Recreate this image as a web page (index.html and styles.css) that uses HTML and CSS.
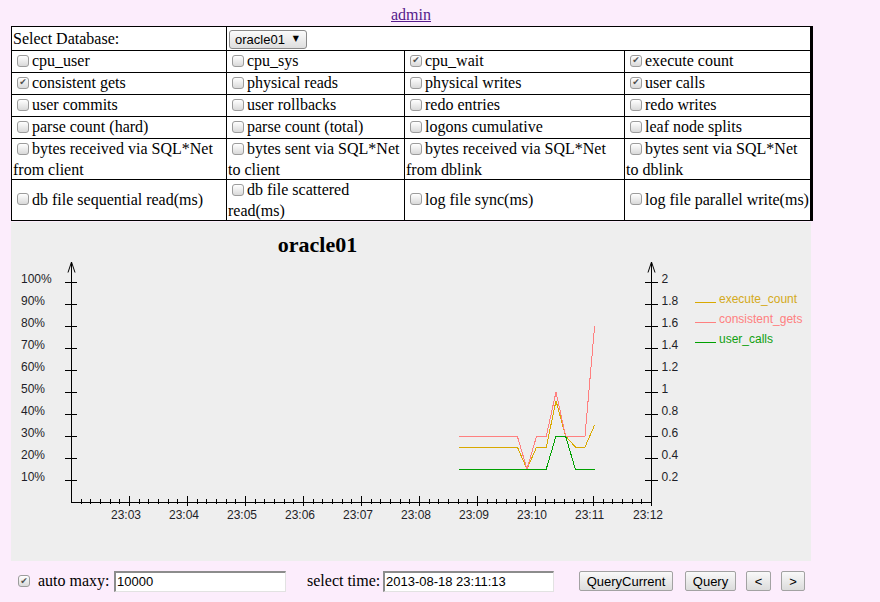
FILE: index.html
```html
<!DOCTYPE html>
<html>
<head>
<meta charset="utf-8">
<title>oracle01</title>
<link rel="stylesheet" href="styles.css">
</head>
<body>
<div class="page">
  <div class="top"><a class="admin" href="#">admin</a></div>
  <table class="grid">
    <colgroup><col class="c1"><col class="c2"><col class="c3"><col class="c4"></colgroup>
    <tr class="r-sel">
      <td>Select Database:</td>
      <td colspan="3"><span class="sel"><select><option>oracle01</option></select></span></td>
    </tr>
    <tr class="r1">
      <td><input type="checkbox">cpu_user</td>
      <td><input type="checkbox">cpu_sys</td>
      <td><input type="checkbox" checked>cpu_wait</td>
      <td><input type="checkbox" checked>execute count</td>
    </tr>
    <tr class="r1">
      <td><input type="checkbox" checked>consistent gets</td>
      <td><input type="checkbox">physical reads</td>
      <td><input type="checkbox">physical writes</td>
      <td><input type="checkbox" checked>user calls</td>
    </tr>
    <tr class="r1">
      <td><input type="checkbox">user commits</td>
      <td><input type="checkbox">user rollbacks</td>
      <td><input type="checkbox">redo entries</td>
      <td><input type="checkbox">redo writes</td>
    </tr>
    <tr class="r1">
      <td><input type="checkbox">parse count (hard)</td>
      <td><input type="checkbox">parse count (total)</td>
      <td><input type="checkbox">logons cumulative</td>
      <td><input type="checkbox">leaf node splits</td>
    </tr>
    <tr class="r2">
      <td><input type="checkbox">bytes received via SQL*Net from client</td>
      <td><input type="checkbox">bytes sent via SQL*Net to client</td>
      <td><input type="checkbox">bytes received via SQL*Net from dblink</td>
      <td><input type="checkbox">bytes sent via SQL*Net to dblink</td>
    </tr>
    <tr class="r2">
      <td><input type="checkbox">db file sequential read(ms)</td>
      <td><input type="checkbox">db file scattered read(ms)</td>
      <td><input type="checkbox">log file sync(ms)</td>
      <td><input type="checkbox">log file parallel write(ms)</td>
    </tr>
  </table>

  <div class="chart">
    <svg class="plot" width="800" height="339" viewBox="0 0 800 339" xmlns="http://www.w3.org/2000/svg">
      <text class="title" x="306.5" y="30" text-anchor="middle">oracle01</text>

      <g class="axis" fill="none" stroke="#000" stroke-width="1" shape-rendering="crispEdges">
        <path d="M60.5 40V280.5H640.5V40"/>
        <path d="M54 60.5h12M54 82.5h12M54 104.5h12M54 126.5h12M54 148.5h12M54 170.5h12M54 192.5h12M54 214.5h12M54 236.5h12M54 258.5h12"/>
        <path d="M634 60.5h13M634 82.5h13M634 104.5h13M634 126.5h13M634 148.5h13M634 170.5h13M634 192.5h13M634 214.5h13M634 236.5h13M634 258.5h13"/>
        <path d="M118.5 274v10M176.5 274v10M234.5 274v10M292.5 274v10M350.5 274v10M408.5 274v10M466.5 274v10M524.5 274v10M582.5 274v10M640.5 274v10"/>
        <path d="M70.5 277v5M79.5 277v5M89.5 277v5M99.5 277v5M108.5 277v5M128.5 277v5M137.5 277v5M147.5 277v5M157.5 277v5M166.5 277v5M186.5 277v5M195.5 277v5M205.5 277v5M215.5 277v5M224.5 277v5M244.5 277v5M253.5 277v5M263.5 277v5M273.5 277v5M282.5 277v5M302.5 277v5M311.5 277v5M321.5 277v5M331.5 277v5M340.5 277v5M360.5 277v5M369.5 277v5M379.5 277v5M389.5 277v5M398.5 277v5M418.5 277v5M427.5 277v5M437.5 277v5M447.5 277v5M456.5 277v5M476.5 277v5M485.5 277v5M495.5 277v5M505.5 277v5M514.5 277v5M534.5 277v5M543.5 277v5M553.5 277v5M563.5 277v5M572.5 277v5M592.5 277v5M601.5 277v5M611.5 277v5M621.5 277v5M630.5 277v5"/>
      </g>
      <g fill="none" stroke="#000" stroke-width="1">
        <path d="M57 50.5L60.5 40L64 50.5"/>
        <path d="M637 50.5L640.5 40L644 50.5"/>
      </g>

      <g class="lbl">
        <text x="10" y="61">100%</text>
        <text x="10" y="83">90%</text>
        <text x="10" y="105">80%</text>
        <text x="10" y="127">70%</text>
        <text x="10" y="149">60%</text>
        <text x="10" y="171">50%</text>
        <text x="10" y="193">40%</text>
        <text x="10" y="215">30%</text>
        <text x="10" y="237">20%</text>
        <text x="10" y="259">10%</text>

        <text x="650.5" y="61">2</text>
        <text x="650.5" y="83">1.8</text>
        <text x="650.5" y="105">1.6</text>
        <text x="650.5" y="127">1.4</text>
        <text x="650.5" y="149">1.2</text>
        <text x="650.5" y="171">1</text>
        <text x="650.5" y="193">0.8</text>
        <text x="650.5" y="215">0.6</text>
        <text x="650.5" y="237">0.4</text>
        <text x="650.5" y="259">0.2</text>

        <text x="100" y="297">23:03</text>
        <text x="158" y="297">23:04</text>
        <text x="216" y="297">23:05</text>
        <text x="274" y="297">23:06</text>
        <text x="332" y="297">23:07</text>
        <text x="390" y="297">23:08</text>
        <text x="448" y="297">23:09</text>
        <text x="506" y="297">23:10</text>
        <text x="564" y="297">23:11</text>
        <text x="622" y="297">23:12</text>
      </g>

      <g fill="none" stroke-width="1" shape-rendering="crispEdges">
        <polyline stroke="#d9a900" points="448.3,225 506.3,225 516,247 525.6,225 535.3,225 545,178.8 554.6,214 564.3,225 574,225 583.6,203"/>
        <polyline stroke="#ff8080" points="448.3,214 506.3,214 516,247 525.6,214 535.3,214 545,170 554.6,214 574,214 583.6,104"/>
        <polyline stroke="#00a000" points="448.3,247 535.3,247 545,214 554.6,214 564.3,247 583.6,247"/>
        <path stroke="#d9a900" d="M684 80.5h21"/>
        <path stroke="#ff8080" d="M684 100.5h21"/>
        <path stroke="#00a000" d="M684 120.5h21"/>
      </g>
      <g class="legend">
        <text x="708" y="81" fill="#d4aa20">execute_count</text>
        <text x="708" y="101" fill="#ff8080">consistent_gets</text>
        <text x="708" y="121" fill="#10a010">user_calls</text>
      </g>
    </svg>
  </div>

  <div class="controls">
    <input class="cb" type="checkbox" checked>
    <span class="lab maxy-lab">auto maxy:</span>
    <input class="txt maxy" type="text" value="10000">
    <span class="lab time">select time:</span>
    <input class="txt when" type="text" value="2013-08-18 23:11:13">
    <button class="btn b-cur">QueryCurrent</button>
    <button class="btn b-q">Query</button>
    <button class="btn b-prev">&lt;</button>
    <button class="btn b-next">&gt;</button>
  </div>
</div>
</body>
</html>
```

FILE: styles.css
```css
html, body {
  margin: 0;
  padding: 0;
  background: #fcedfc;
}
body {
  font-family: "Liberation Serif", "Times New Roman", serif;
  font-size: 16px;
  color: #000;
}
.page {
  width: 800px;
  margin-left: 11px;
}
.top {
  padding-top: 6px;
  text-align: center;
  line-height: 18px;
  box-sizing: border-box;
  height: 26px;
}
.admin {
  color: #551a8b;
}
.grid {
  width: 800px;
  border-collapse: collapse;
  table-layout: fixed;
  background: #fff;
  border-right: 3px solid #000;
}
.c1 { width: 215px; }
.c2 { width: 178px; }
.c3 { width: 220px; }
.c4 { width: 187px; }
.grid td {
  border: 1px solid #000;
  padding: 0 1px;
  line-height: 19px;
  vertical-align: middle;
}
.r-sel { height: 24px; }
.r1 { height: 22px; }
.r2 { height: 41px; }

input[type="checkbox"] {
  -webkit-appearance: none;
  appearance: none;
  width: 12px;
  height: 12px;
  margin: 1px 3px 5px 4px;
  box-sizing: border-box;
  border: 1px solid #9c9c9c;
  border-radius: 3px;
  background: linear-gradient(#ffffff, #d9d9d9);
  vertical-align: middle;
  display: inline-flex;
  align-items: center;
  justify-content: center;
}
input[type="checkbox"]:checked::before {
  content: "\2714";
  font-family: "DejaVu Sans", sans-serif;
  font-size: 9px;
  line-height: 9px;
  color: #505050;
}

.sel {
  position: relative;
  display: inline-block;
  margin-left: 1px;
  vertical-align: middle;
}
.sel select {
  -webkit-appearance: none;
  appearance: none;
  width: 78px;
  height: 19px;
  box-sizing: border-box;
  border: 1px solid #8a8a8a;
  border-radius: 3px;
  background: linear-gradient(#fbfbfb, #dedede);
  font-family: "Liberation Sans", Arial, sans-serif;
  font-size: 13px;
  padding: 0 0 0 5px;
  color: #000;
  display: block;
}
.sel::after {
  content: "\25BC";
  position: absolute;
  right: 8px;
  top: 5px;
  font-family: "DejaVu Sans", sans-serif;
  font-size: 8px;
  line-height: 8px;
  color: #000;
  pointer-events: none;
}

.chart {
  width: 800px;
  height: 339px;
  background: #eeeeee;
  margin-top: 1px;
}
.plot {
  display: block;
}
.title {
  font-family: "Liberation Serif", "Times New Roman", serif;
  font-weight: bold;
  font-size: 22px;
  fill: #000;
}
.lbl text {
  font-family: "Liberation Sans", Arial, sans-serif;
  font-size: 12px;
  fill: #1e1e28;
}
.legend text {
  font-family: "Liberation Sans", Arial, sans-serif;
  font-size: 12px;
}

.controls {
  display: flex;
  align-items: center;
  margin-top: 9px;
  height: 22px;
}
.controls .cb {
  margin: 0 0 0 7px;
  flex: none;
}
.lab {
  flex: none;
  white-space: nowrap;
}
.maxy-lab {
  margin-left: 8px;
  width: 70px;
}
.lab.time {
  margin-left: 21px;
  width: 70px;
}
.txt {
  flex: none;
  box-sizing: border-box;
  height: 21px;
  margin-left: 6px;
  border-style: solid;
  border-width: 2px 1px 1px 2px;
  border-color: #8c8c8c #e2e2e2 #e2e2e2 #8c8c8c;
  background: #fff;
  font-family: "Liberation Sans", Arial, sans-serif;
  font-size: 13px;
  padding: 0 1px;
  color: #000;
}
.maxy { width: 172px; }
.when { width: 171px; }
.btn {
  flex: none;
  box-sizing: border-box;
  height: 20px;
  padding: 0;
  border: 1px solid #a2a2a2;
  border-radius: 2px;
  background: linear-gradient(#f9f9f9, #dcdcdc);
  font-family: "Liberation Sans", Arial, sans-serif;
  font-size: 13px;
  color: #000;
  text-align: center;
}
.b-cur { width: 94px; margin-left: 25px; }
.b-q { width: 51px; margin-left: 12px; }
.b-prev { width: 25px; margin-left: 10px; }
.b-next { width: 24px; margin-left: 10px; }
```
